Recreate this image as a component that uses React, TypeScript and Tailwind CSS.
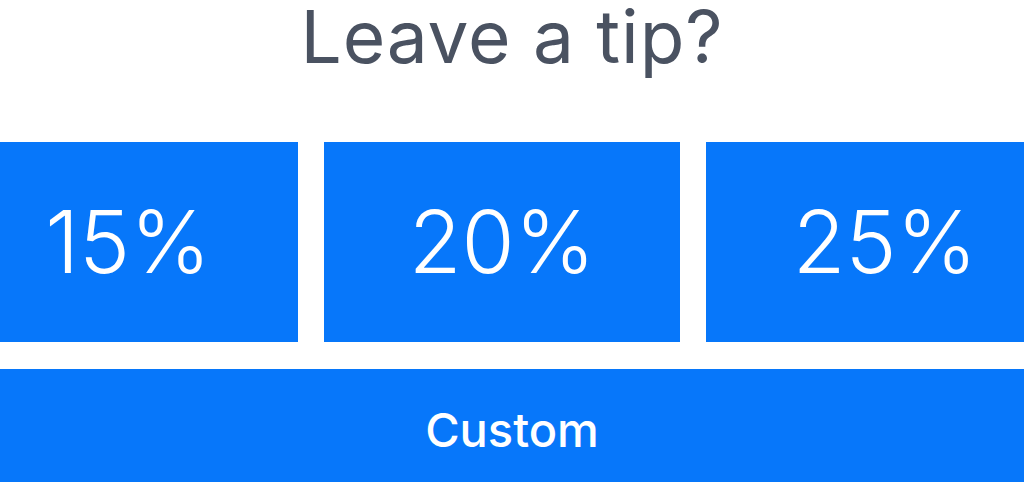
export default function App() {
  return (
    <div className="w-[1024px] h-[482px] overflow-hidden bg-white flex flex-col" style={{ fontFamily: "Inter, 'Noto Sans', sans-serif" }}>
      <div className="h-[142px] shrink-0 flex justify-center">
        <h1 className="text-[73px] leading-[74px] font-normal text-[#4a5261] tracking-[0.9px]">Leave a tip?</h1>
      </div>
      <div className="flex shrink-0 gap-[26px] h-[200px]">
        <button className="w-[298px] bg-[#0777fa] text-white text-[86px] font-[350] leading-none flex items-center justify-center pr-[42px]">15%</button>
        <button className="w-[356px] bg-[#0777fa] text-white text-[86px] font-[350] leading-none flex items-center justify-center">20%</button>
        <button className="flex-1 bg-[#0777fa] text-white text-[86px] font-[350] leading-none flex items-center justify-center pl-[40px]">25%</button>
      </div>
      <div className="mt-[27px] shrink-0">
        <button className="w-full h-[120px] bg-[#0777fa] text-white text-[47px] font-[450] leading-none flex justify-center pt-[37px]">Custom</button>
      </div>
    </div>
  );
}
